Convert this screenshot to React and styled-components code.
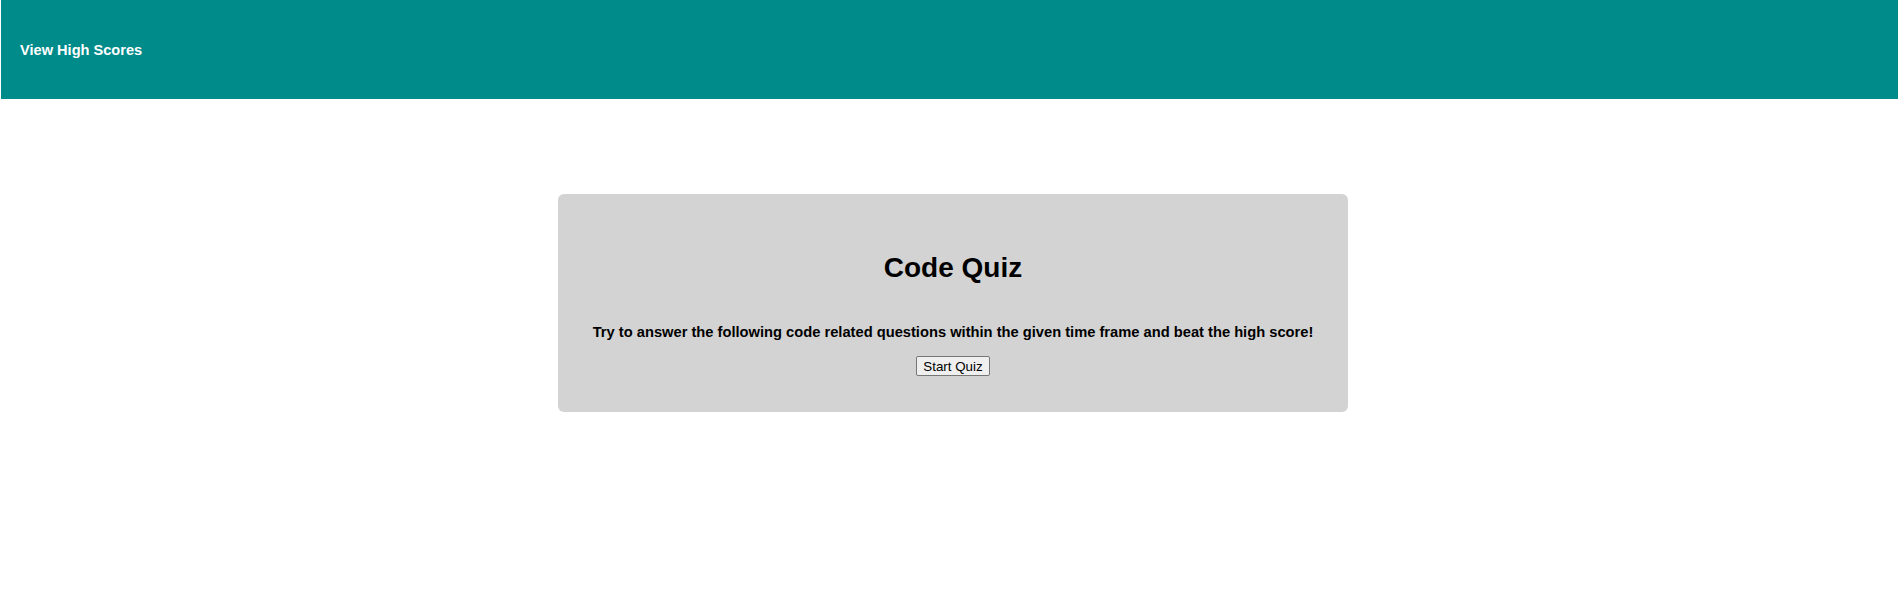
import React from "react";
import styled, { createGlobalStyle } from "styled-components";

const GlobalStyle = createGlobalStyle`
  body {
    margin: 0;
    background: #ffffff;
    font-family: "Liberation Sans", Arial, sans-serif;
  }
`;

const Page = styled.div`
  width: 100%;
  min-height: 592px;
  display: flex;
  flex-direction: column;
`;

const Header = styled.header`
  height: 99px;
  margin-left: 1px;
  background-color: darkcyan;
  display: flex;
  align-items: center;
  padding-left: 19px;
`;

const HighScoresLink = styled.a`
  color: #ffffff;
  font-weight: bold;
  font-size: 14.6px;
  text-decoration: none;
  cursor: pointer;
`;

const Main = styled.main`
  display: flex;
  justify-content: center;
  padding-top: 95px;
  padding-left: 8px;
`;

const Card = styled.section`
  width: 790px;
  height: 218px;
  box-sizing: border-box;
  background-color: lightgray;
  border-radius: 6px;
  display: flex;
  flex-direction: column;
  align-items: center;
  padding-top: 58px;
`;

const Title = styled.h1`
  margin: 0;
  font-size: 28px;
  line-height: 32px;
  font-weight: bold;
  color: #000;
`;

const Intro = styled.p`
  margin: 39px 0 0;
  font-size: 14.7px;
  line-height: 18px;
  font-weight: bold;
  color: #000;
`;

const StartButton = styled.button`
  margin-top: 15px;
  height: 20px;
  padding: 1px 6px;
  font-family: "Liberation Sans", Arial, sans-serif;
  font-size: 13.33px;
  background: #efefef;
  border: 1px solid #767676;
  border-radius: 2px;
  color: #000;
`;

export default function App() {
  return (
    <Page>
      <GlobalStyle />
      <Header>
        <HighScoresLink>View High Scores</HighScoresLink>
      </Header>
      <Main>
        <Card>
          <Title>Code Quiz</Title>
          <Intro>
            Try to answer the following code related questions within the given
            time frame and beat the high score!
          </Intro>
          <StartButton>Start Quiz</StartButton>
        </Card>
      </Main>
    </Page>
  );
}
